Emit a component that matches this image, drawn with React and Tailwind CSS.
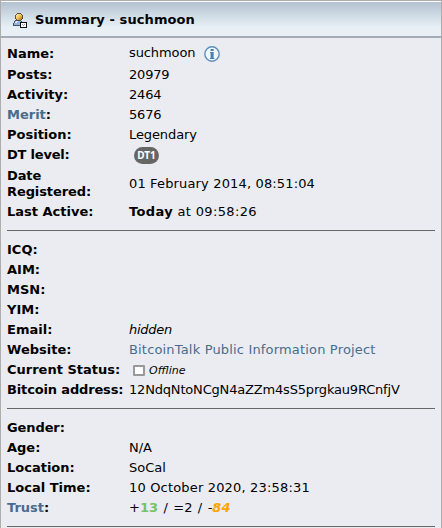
// App.jsx
function UserIcon() {
  return (
    <svg width="16" height="16" viewBox="0 0 16 16" shapeRendering="crispEdges" className="mt-px shrink-0">
      <defs>
        <linearGradient id="hair" x1="0" y1="0" x2="1" y2="1">
          <stop offset="0" stopColor="#fff3c4" />
          <stop offset="0.5" stopColor="#f3c04f" />
          <stop offset="1" stopColor="#a86a10" />
        </linearGradient>
      </defs>
      {/* head */}
      <path d="M5 1h4v1h1v1h1v4h-1v1H9v1H5V8H4V7H3V3h1V2h1z" fill="#55503f" />
      <path d="M5 2h4v1h1v4H9v1H5V7H4V3h1z" fill="url(#hair)" />
      {/* body */}
      <path d="M3 8h6v1h1v5H1v-3h1V9h1z" fill="#46505e" />
      <path d="M3 9h6v4H2v-2h1z" fill="#91b3de" />
      <path d="M4 9h2v1H5v1H3v-1h1z" fill="#e2edf9" />
      {/* card */}
      <path d="M8 10h7v6H8z" fill="#111" />
      <path d="M9 11h5v4H9z" fill="#fff" />
      <path d="M10 12h1v1h-1zM12 12h1v1h-1zM11 13h1v1h-1z" fill="#999" />
    </svg>
  );
}

function InfoIcon() {
  return (
    <svg width="16" height="16" viewBox="0 0 16 16" className="ml-[9px] shrink-0">
      <circle cx="8" cy="8" r="7.2" fill="#f1f6fa" stroke="#5b8fba" strokeWidth="1.4" />
      <path d="M6.6 3h3v2h-3zM6 6h3.6v6h.8v1H6v-1h.6V7H6z" fill="#4681b1" />
    </svg>
  );
}

function Row({ label, link, children, className = "h-5", labelClass = "" }) {
  return (
    <div className={`flex items-center ${className}`}>
      <div className={`w-[122px] shrink-0 whitespace-nowrap font-bold ${labelClass}`}>
        {link ? <a className="text-[#476c8e]">{label}</a> : label}:
      </div>
      <div className="flex items-center whitespace-pre">{children}</div>
    </div>
  );
}

function App() {
  return (
    <div className="h-[528px] w-[442px] overflow-hidden border-x border-t border-[#adadad] bg-[#ebecf1] font-['DejaVu_Sans',Verdana,sans-serif] text-[13px] leading-4 text-black">
      {/* Title bar */}
      <div className="flex h-[37px] items-center border-t border-b-2 border-t-white border-b-[#a5abb7] bg-linear-to-b from-[#b4c1d0] via-[#d3dfe8] via-45% to-[#e8f0f6] to-75% pl-[11px]">
        <UserIcon />
        <span className="mt-[2px] ml-[7px] font-bold tracking-[0.08px]">Summary - suchmoon</span>
      </div>

      <div className="px-[6px] pt-[6px]">
        <Row label="Name" className="mb-px h-5"><span className="-mt-[2px] tracking-[-0.1px]">suchmoon</span><InfoIcon /></Row>
        <Row label="Posts"><span className="tracking-[-0.2px]">20979</span></Row>
        <Row label="Activity"><span className="tracking-[-0.2px]">2464</span></Row>
        <Row label="Merit" link><span className="tracking-[-0.2px]">5676</span></Row>
        <Row label="Position"><span className="tracking-[-0.1px]">Legendary</span></Row>
        <Row label="DT level" labelClass="tracking-[-0.2px]">
          <span className="ml-[5px] flex h-[17px] w-[25px] items-center justify-center rounded-full bg-[#666] font-['Noto_Sans',sans-serif] text-[10px] font-bold text-white">DT1</span>
        </Row>
        <Row label={<>Date<br />Registered</>} className="h-[38px]" labelClass="tracking-[-0.1px]">
          <span className="tracking-[0.15px]">01 February 2014, 08:51:04</span>
        </Row>
        <Row label="Last Active" className="h-[17px]">
          <span className="tracking-[0.35px]"><b>Today</b> at 09:58:26</span>
        </Row>

        <hr className="mt-[10px] mb-[9px] border-t border-[#666]" />

        <Row label="ICQ" />
        <Row label="AIM" />
        <Row label="MSN" />
        <Row label="YIM" />
        <Row label="Email"><i className="tracking-[-0.25px]">hidden</i></Row>
        <Row label="Website"><a className="tracking-[0.17px] text-[#476c8e]">BitcoinTalk Public Information Project</a></Row>
        <Row label="Current Status">
          <span className="mr-1 ml-1 h-[11px] w-3 rounded-[1px] border-2 border-[#999] bg-white"></span>
          <i className="mt-[2px] text-[11px]">Offline</i>
        </Row>
        <Row label="Bitcoin address" labelClass="tracking-[-0.15px]">
          <span className="tracking-[-0.18px]">12NdqNtoNCgN4aZZm4sS5prgkau9RCnfjV</span>
        </Row>

        <hr className="mt-2 mb-[9px] border-t border-[#666]" />

        <Row label="Gender" labelClass="tracking-[-0.1px]" />
        <Row label="Age">N/A</Row>
        <Row label="Location">SoCal</Row>
        <Row label="Local Time"><span className="tracking-[0.17px]">10 October 2020, 23:58:31</span></Row>
        <Row label="Trust" link>
          <span className="[word-spacing:1.3px]">
            +<b className="text-[#74c365]">13</b> / =2 / -<b className="text-[#ffa500] italic">84</b>
          </span>
        </Row>

        <hr className="mt-2 border-t border-[#666]" />
      </div>
    </div>
  );
}

export default App;
